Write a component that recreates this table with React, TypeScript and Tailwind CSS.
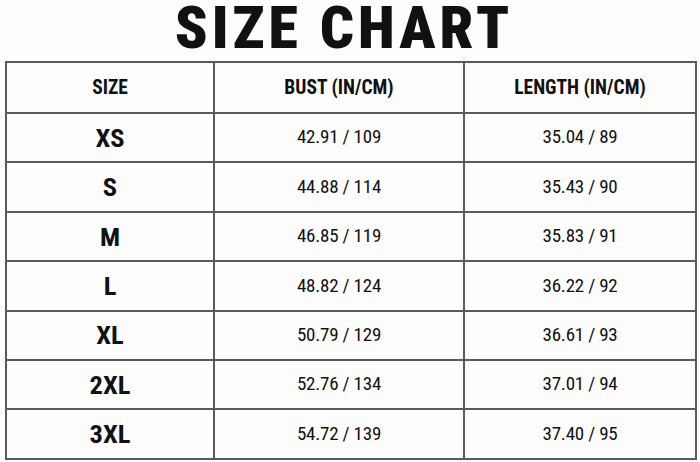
import React from "react";

const rows = [
  ["XS", "42.91 / 109", "35.04 / 89"],
  ["S", "44.88 / 114", "35.43 / 90"],
  ["M", "46.85 / 119", "35.83 / 91"],
  ["L", "48.82 / 124", "36.22 / 92"],
  ["XL", "50.79 / 129", "36.61 / 93"],
  ["2XL", "52.76 / 134", "37.01 / 94"],
  ["3XL", "54.72 / 139", "37.40 / 95"],
];

const font = {
  fontFamily:
    '"Roboto Condensed", "Liberation Sans Narrow", "Arial Narrow", "DejaVu Sans Condensed", Roboto, sans-serif',
};

export default function App() {
  return (
    <div className="w-[700px] h-[462px] bg-[#fdfdfd] text-[#111] font-stretch-condensed" style={font}>
      <div className="h-[61px] flex items-start justify-center">
        <h1 className="text-[60px] font-black leading-[56px] tracking-[4px] pl-[4px] mr-[16px]">SIZE CHART</h1>
      </div>
      <table className="ml-[5px] w-[690px] border-collapse table-fixed">
        <colgroup>
          <col className="w-[208px]" />
          <col className="w-[250px]" />
          <col className="w-[232px]" />
        </colgroup>
        <thead>
          <tr className="h-[51px]">
            <th className="border-2 border-[#5a5a5a] text-[19.5px] font-bold">SIZE</th>
            <th className="border-2 border-[#5a5a5a] text-[19.5px] font-bold">BUST (IN/CM)</th>
            <th className="border-2 border-[#5a5a5a] text-[19.5px] font-bold">LENGTH (IN/CM)</th>
          </tr>
        </thead>
        <tbody>
          {rows.map((r) => (
            <tr key={r[0]} className="h-[49.4px]">
              <td className="border-2 border-[#5a5a5a] text-center text-[26.5px] font-bold">{r[0]}</td>
              <td className="border-2 border-[#5a5a5a] text-center text-[19px] tracking-[-0.2px]">{r[1]}</td>
              <td className="border-2 border-[#5a5a5a] text-center text-[19px] tracking-[-0.2px]">{r[2]}</td>
            </tr>
          ))}
        </tbody>
      </table>
    </div>
  );
}
